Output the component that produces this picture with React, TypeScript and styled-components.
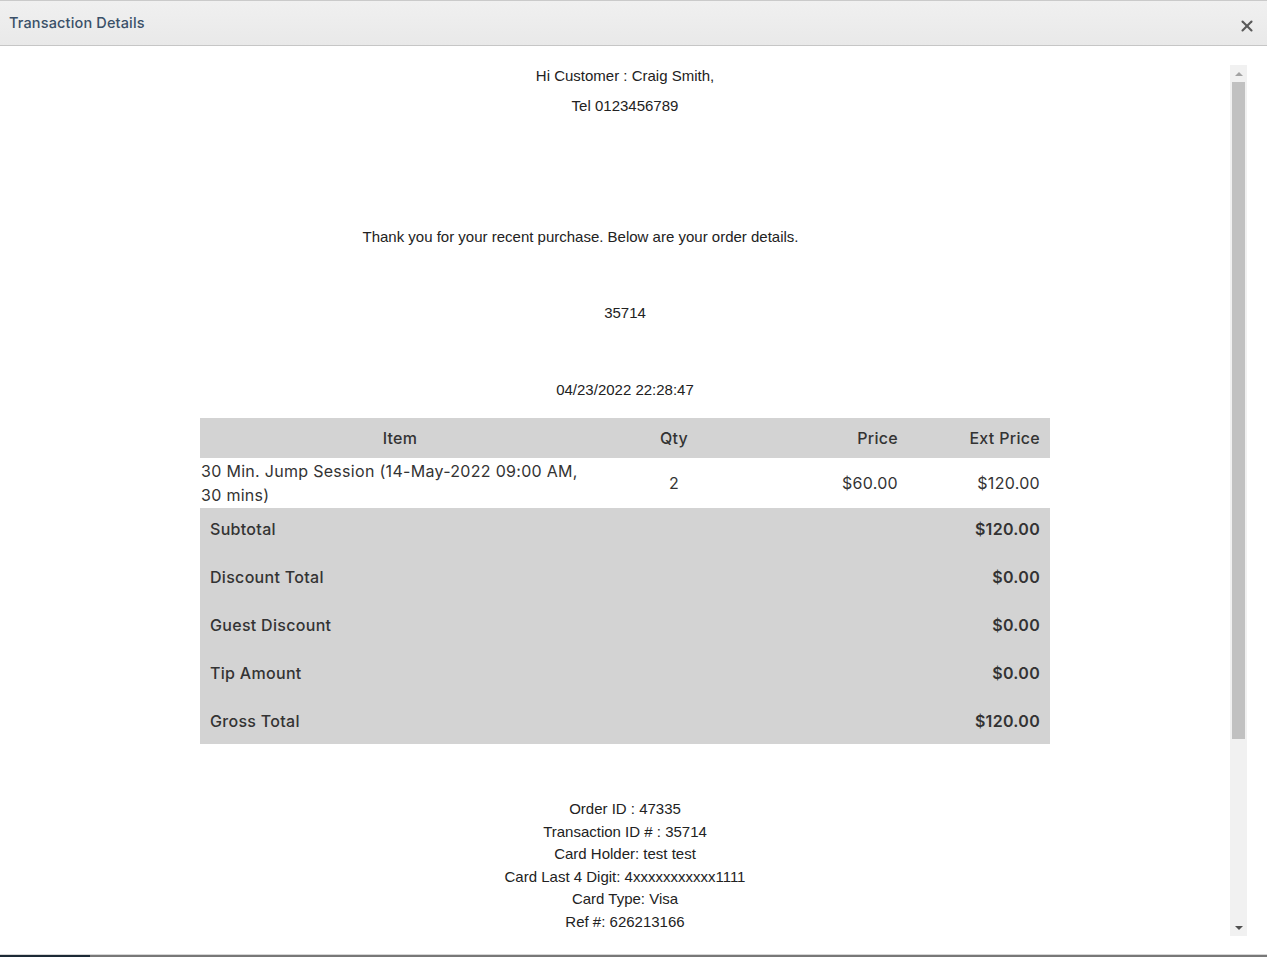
import styled, { createGlobalStyle } from 'styled-components'
import { X } from 'lucide-react'

const GlobalStyle = createGlobalStyle`
  html, body, #root {
    margin: 0;
    height: 100%;
  }
  body {
    font-family: "Liberation Sans", Arial, sans-serif;
    color: #222;
    background: #fff;
  }
`

const Page = styled.div`
  height: 100vh;
  display: flex;
  flex-direction: column;
  overflow: hidden;
`

const Modal = styled.div`
  flex: 1;
  display: flex;
  flex-direction: column;
  min-height: 0;
  border-bottom: 1px solid #d6d6d6;
`

const Header = styled.div`
  height: 44px;
  border-top: 1px solid #cacaca;
  border-bottom: 1px solid #c6c6c6;
  background: linear-gradient(#f0f0f0, #e9e9e9);
  display: flex;
  align-items: center;
  justify-content: space-between;
  padding: 0 11px 0 9px;
`

const Title = styled.h4`
  margin: 0 0 2px;
  font-family: Inter, "Noto Sans", sans-serif;
  font-size: 14.5px;
  font-weight: 500;
  color: #3a5068;
  letter-spacing: 0.15px;
`

const CloseButton = styled.button`
  border: 0;
  background: none;
  padding: 0;
  margin-top: 6px;
  display: flex;
  color: #5a5a5a;
  cursor: pointer;
`

const Body = styled.div`
  flex: 1;
  min-height: 0;
  display: flex;
  padding: 19px 20px 18px;
`

const Content = styled.div`
  flex: 1;
  overflow: hidden;
  display: flex;
  flex-direction: column;
  align-items: center;
  padding-top: 1px;
  font-size: 15px;
  color: #222;
`

const Line = styled.div<{ $top?: number; $shift?: number }>`
  line-height: 20px;
  margin-top: ${p => p.$top ?? 0}px;
  padding-right: ${p => p.$shift ?? 0}px;
  text-align: center;
`

const Receipt = styled.div`
  width: 850px;
  margin-top: 18px;
  font-family: Inter, "Noto Sans", sans-serif;
  font-size: 16px;
  letter-spacing: 0.3px;
  color: #333;
`

const GridRow = styled.div`
  display: grid;
  grid-template-columns: 400px 148px 160px 142px;
  align-items: center;
`

const HeadRow = styled(GridRow)`
  height: 40px;
  background: #d3d3d3;
  font-weight: 500;
`

const ItemRow = styled(GridRow)`
  height: 50px;
  background: #fff;
  line-height: 24px;
`

const Cell = styled.div<{ $align?: 'left' | 'center' | 'right'; $pad?: boolean }>`
  text-align: ${p => p.$align ?? 'left'};
  padding: ${p => (p.$pad ? '0 10px' : '0 1px')};
`

const Summary = styled.div`
  background: #d3d3d3;
  padding: 0 10px;
  font-weight: 500;
`

const SummaryRow = styled.div`
  box-sizing: border-box;
  height: 48px;
  display: flex;
  align-items: center;
  justify-content: space-between;

  &:first-child {
    height: 45px;
    padding-bottom: 3px;
  }
  &:last-child {
    height: 47px;
  }
`

const Value = styled.span`
  font-weight: 600;
`

const Details = styled.div`
  margin-top: 54px;
  line-height: 22.5px;
  text-align: center;
`

const Scrollbar = styled.div`
  width: 17px;
  background: #f1f1f1;
  display: flex;
  flex-direction: column;
  align-items: center;
`

const Arrow = styled.div<{ $down?: boolean; $active?: boolean }>`
  height: 17px;
  width: 17px;
  display: flex;
  align-items: center;
  justify-content: center;

  &::before {
    content: '';
    border-left: 4px solid transparent;
    border-right: 4px solid transparent;
    ${p =>
      p.$down
        ? `border-top: 4px solid ${p.$active ? '#505050' : '#a3a3a3'};`
        : `border-bottom: 4px solid ${p.$active ? '#505050' : '#a3a3a3'};`}
  }
`

const Thumb = styled.div`
  width: 13px;
  height: 657px;
  background: #c1c1c1;
`

const Track = styled.div`
  flex: 1;
`

const Backdrop = styled.div`
  height: 2px;
  background: linear-gradient(to right, #1c2935 90px, #787878 90px);
`

const summary = [
  ['Subtotal', '$120.00'],
  ['Discount Total', '$0.00'],
  ['Guest Discount', '$0.00'],
  ['Tip Amount', '$0.00'],
  ['Gross Total', '$120.00'],
]

const details = [
  'Order ID : 47335',
  'Transaction ID # : 35714',
  'Card Holder: test test',
  'Card Last 4 Digit: 4xxxxxxxxxxx1111',
  'Card Type: Visa',
  'Ref #: 626213166',
]

export default function App() {
  return (
    <Page>
      <GlobalStyle />
      <Modal>
        <Header>
          <Title>Transaction Details</Title>
          <CloseButton aria-label="Close">
            <X size={18} strokeWidth={2.8} />
          </CloseButton>
        </Header>
        <Body>
          <Content>
            <Line>Hi Customer : Craig Smith,</Line>
            <Line $top={10}>Tel 0123456789</Line>
            <Line $top={111} $shift={89}>
              Thank you for your recent purchase. Below are your order details.
            </Line>
            <Line $top={56}>35714</Line>
            <Line $top={57}>04/23/2022 22:28:47</Line>
            <Receipt>
              <HeadRow>
                <Cell $align="center">Item</Cell>
                <Cell $align="center">Qty</Cell>
                <Cell $align="right" $pad>Price</Cell>
                <Cell $align="right" $pad>Ext Price</Cell>
              </HeadRow>
              <ItemRow>
                <Cell>30 Min. Jump Session (14-May-2022 09:00 AM, 30 mins)</Cell>
                <Cell $align="center">2</Cell>
                <Cell $align="right" $pad>$60.00</Cell>
                <Cell $align="right" $pad>$120.00</Cell>
              </ItemRow>
              <Summary>
                {summary.map(([label, value]) => (
                  <SummaryRow key={label}>
                    <span>{label}</span>
                    <Value>{value}</Value>
                  </SummaryRow>
                ))}
              </Summary>
            </Receipt>
            <Details>
              {details.map(d => (
                <div key={d}>{d}</div>
              ))}
            </Details>
          </Content>
          <Scrollbar>
            <Arrow />
            <Thumb />
            <Track />
            <Arrow $down $active />
          </Scrollbar>
        </Body>
      </Modal>
      <Backdrop />
    </Page>
  )
}
